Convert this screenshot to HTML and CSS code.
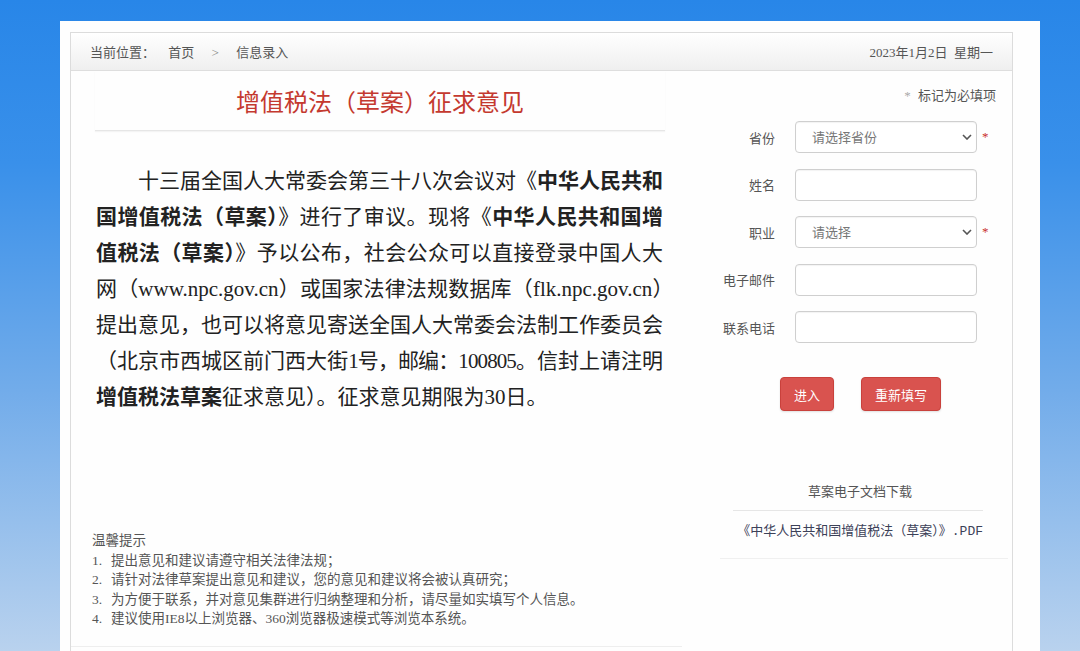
FILE: index.html
```html
<!DOCTYPE html>
<html lang="zh-CN">
<head>
  <meta charset="UTF-8" />
  <title>增值税法（草案）征求意见</title>
  <link rel="stylesheet" href="styles.css">
</head>
<body>

  <div class="panel">
    <div class="box">

      <!-- barra de ubicación -->
      <div class="topbar">
        <div class="crumbs">
          <span>当前位置：</span>
          <span class="crumb">首页</span>
          <span class="sep">&gt;</span>
          <span>信息录入</span>
        </div>
        <div class="date">2023年1月2日&nbsp;&nbsp;星期一</div>
      </div>

      <div class="main">

        <!-- columna izquierda -->
        <div class="left">
          <h1 class="title">增值税法（草案）征求意见</h1>
          <p class="notice">十三届全国人大常委会第三十八次会议对《<b>中华人民共和国增值税法（草案）</b>》进行了审议。现将《<b>中华人民共和国增值税法（草案）</b>》予以公布，社会公众可以直接登录中国人大网（www.npc.gov.cn）或国家法律法规数据库（flk.npc.gov.cn）提出意见，也可以将意见寄送全国人大常委会法制工作委员会（北京市西城区前门西大街<span class="tight">1号，邮编：100805</span>。信封上请注明<b>增值税法草案</b>征求意见）。征求意见期限为30日。</p>

          <div class="tips">
            <div>温馨提示</div>
            <div><span class="num">1.</span>提出意见和建议请遵守相关法律法规；</div>
            <div><span class="num">2.</span>请针对法律草案提出意见和建议，您的意见和建议将会被认真研究；</div>
            <div><span class="num">3.</span>为方便于联系，并对意见集群进行归纳整理和分析，请尽量如实填写个人信息。</div>
            <div><span class="num">4.</span>建议使用IE8以上浏览器、360浏览器极速模式等浏览本系统。</div>
          </div>
        </div>

        <!-- columna derecha: formulario -->
        <div class="right">
          <div class="required-note"><span class="star-gray">*</span> 标记为必填项</div>

          <form class="form">
            <div class="row">
              <label for="province">省份</label>
              <div class="select-wrap">
                <select id="province">
                  <option>请选择省份</option>
                </select>
                <svg class="chevron" width="10" height="6" viewBox="0 0 10 6"><path d="M1 1l4 4 4-4" fill="none" stroke="#555" stroke-width="1.6"/></svg>
              </div>
              <span class="star">*</span>
            </div>
            <div class="row">
              <label for="name">姓名</label>
              <input type="text" id="name">
            </div>
            <div class="row">
              <label for="job">职业</label>
              <div class="select-wrap">
                <select id="job">
                  <option>请选择</option>
                </select>
                <svg class="chevron" width="10" height="6" viewBox="0 0 10 6"><path d="M1 1l4 4 4-4" fill="none" stroke="#555" stroke-width="1.6"/></svg>
              </div>
              <span class="star">*</span>
            </div>
            <div class="row">
              <label for="mail">电子邮件</label>
              <input type="text" id="mail">
            </div>
            <div class="row">
              <label for="phone">联系电话</label>
              <input type="text" id="phone">
            </div>

            <div class="buttons">
              <button type="submit" class="btn">进入</button>
              <button type="reset" class="btn">重新填写</button>
            </div>
          </form>

          <div class="download">
            <div class="download-title">草案电子文档下载</div>
            <div class="download-line"></div>
            <div class="download-link">《中华人民共和国增值税法（草案）》<span class="ext">.PDF</span></div>
          </div>
        </div>

      </div>
    </div>
  </div>

</body>
</html>
```

FILE: styles.css
```css
html, body {
  height: 100%;
}
body {
  margin: 0;
  overflow: hidden;
  font-family: "Liberation Serif", "Noto Sans CJK SC", serif;
  background: linear-gradient(to bottom, #2886e8 0%, #3990ea 25%, #72acea 60%, #b9d2ee 100%);
}
.panel {
  margin: 21px 40px 0 60px;
  padding: 11px 27px 0 10px;
  background: #fefefe;
  height: 630px;
  box-sizing: border-box;
}
.box {
  border: 1px solid #dcdcdc;
  border-bottom: none;
  height: 100%;
  box-sizing: border-box;
}
.topbar {
  height: 37px;
  border-bottom: 1px solid #dedede;
  background: linear-gradient(to bottom, #ffffff, #efefef);
  display: flex;
  justify-content: space-between;
  align-items: center;
  padding: 0 19px;
  font-size: 13px;
  color: #555;
}
.crumb {
  margin-left: 10px;
}
.sep {
  margin: 0 14px;
  color: #888;
}
.main {
  display: flex;
}
.left {
  width: 620px;
  box-sizing: border-box;
  padding: 0 26px 0 24px;
}
.title {
  margin: 0;
  padding: 16px 0 11px;
  font-size: 24px;
  line-height: 32px;
  font-weight: normal;
  text-align: center;
  color: #c4392f;
  border-bottom: 1px solid #e6e6e6;
  box-shadow: 0 1px 1px #f4f4f4;
}
.notice {
  margin: 32px 0 0 1px;
  width: 567px;
  font-size: 21px;
  line-height: 36px;
  text-indent: 2em;
  text-align: justify;
  color: #222;
}
.notice b {
  font-weight: bold;
}
.notice .tight {
  letter-spacing: -0.9px;
}
.tips {
  margin: 116px -17px 0 -24px;
  padding: 0 0 17px 21px;
  border-bottom: 1px solid #eeeeee;
  font-size: 13.5px;
  line-height: 19.5px;
  color: #555;
}
.num {
  display: inline-block;
  width: 19px;
}
.right {
  flex: 1;
  padding-top: 15px;
}
.required-note {
  text-align: right;
  padding-right: 16px;
  font-size: 13px;
  line-height: 20px;
  color: #555;
}
.star-gray {
  color: #aaa;
  margin-right: 4px;
}
.form {
  margin-top: 15px;
}
.row {
  display: flex;
  align-items: center;
  height: 32px;
  margin-bottom: 15.5px;
}
.row label {
  width: 84px;
  margin-right: 20px;
  text-align: right;
  font-size: 13px;
  color: #555;
}
.row input, .row select {
  width: 182px;
  height: 32px;
  box-sizing: border-box;
  border: 1px solid #cfcfcf;
  border-radius: 4px;
  background: #fff;
  box-shadow: inset 0 1px 1px rgba(0, 0, 0, 0.05);
  font-family: inherit;
  font-size: 13px;
  color: #777;
  padding: 0 16px;
  outline: none;
}
.row select {
  appearance: none;
  -webkit-appearance: none;
}
.select-wrap {
  position: relative;
  width: 182px;
  height: 32px;
}
.chevron {
  position: absolute;
  right: 5px;
  top: 13px;
  pointer-events: none;
}
.star {
  margin-left: 5px;
  color: #c9302c;
  font-size: 13px;
}
.buttons {
  display: flex;
  gap: 27px;
  padding-left: 89px;
  margin-top: 34px;
}
.btn {
  height: 34px;
  padding: 0 13px;
  border: 1px solid #c9413c;
  border-radius: 4px;
  background: #d9534f;
  color: #fff;
  font-family: inherit;
  font-size: 13px;
  cursor: pointer;
  box-shadow: 0 1px 2px rgba(0, 0, 0, 0.12);
}
.download {
  margin: 71px 4px 0 29px;
  border-bottom: 1px solid #f0f0f0;
  font-size: 13px;
  color: #555;
}
.download-title {
  text-align: center;
  line-height: 20px;
  padding: 0 8px 8px 0;
}
.download-line {
  border-top: 1px solid #e6e6e6;
  margin: 0 25px 0 13px;
}
.download-link {
  text-align: right;
  padding: 10px 25px 16px 0;
  line-height: 20px;
  color: #3c4158;
  white-space: nowrap;
}
.ext {
  font-family: "Liberation Mono", monospace;
}
```
